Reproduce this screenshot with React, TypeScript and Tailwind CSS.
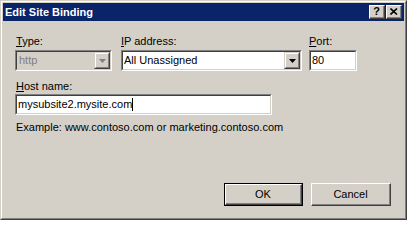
import React from "react";

function Sunken({ className = "", children, disabled = false }: { className?: string; children?: React.ReactNode; disabled?: boolean }) {
  return (
    <div className={`border border-t-[#808080] border-l-[#808080] border-r-white border-b-white ${className}`}>
      <div className={`h-full border border-t-[#404040] border-l-[#404040] border-r-[#d4d0c8] border-b-[#d4d0c8] flex items-center ${disabled ? "bg-[#d4d0c8]" : "bg-white"}`}>
        {children}
      </div>
    </div>
  );
}

function DropBtn({ disabled = false }: { disabled?: boolean }) {
  return (
    <div className="ml-auto w-[16px] h-[17px] border border-t-[#d4d0c8] border-l-[#d4d0c8] border-r-[#404040] border-b-[#404040]">
      <div className="h-full bg-[#d4d0c8] border border-t-white border-l-white border-r-[#808080] border-b-[#808080] flex items-center justify-center">
        <svg width="7" height="4" viewBox="0 0 7 4">
          <path d="M0 0H7L3.5 4Z" fill={disabled ? "#808080" : "#000"} />
        </svg>
      </div>
    </div>
  );
}

function TitleBtn({ children }: { children: React.ReactNode }) {
  return (
    <div className="w-[16px] h-[14px] border border-t-white border-l-white border-r-[#404040] border-b-[#404040]">
      <div className="h-full bg-[#d4d0c8] border-r border-b border-r-[#808080] border-b-[#808080] flex items-center justify-center">
        {children}
      </div>
    </div>
  );
}

function Btn({ label, def = false }: { label: string; def?: boolean }) {
  const inner = (
    <div className="h-full border border-t-white border-l-white border-r-[#404040] border-b-[#404040]">
      <div className="h-full bg-[#d4d0c8] border-r border-b border-r-[#808080] border-b-[#808080] flex items-center justify-center">
        {label}
      </div>
    </div>
  );
  return def ? (
    <div className="w-[79px] h-[23px] border border-black">{inner}</div>
  ) : (
    <div className="w-[80px] h-[23px]">{inner}</div>
  );
}

export default function App() {
  return (
    <div className="w-[407px] h-[220px] bg-[#d4d0c8] border border-t-[#d4d0c8] border-l-[#d4d0c8] border-r-[#404040] border-b-[#404040] font-['Liberation_Sans',Arial,sans-serif] text-[11px] leading-[13px] text-black">
      <div className="h-full border border-t-white border-l-white border-r-[#808080] border-b-[#808080] p-px flex flex-col">
        <div className="h-[18px] bg-[#0a246a] flex items-center pl-[2px] pr-[2px]">
          <span className="text-white font-bold text-[11px]">Edit Site Binding</span>
          <div className="ml-auto flex gap-[1px]">
            <TitleBtn>
              <span className="font-bold text-[11px] leading-none">?</span>
            </TitleBtn>
            <TitleBtn>
              <svg width="8" height="7" viewBox="0 0 8 7">
                <path d="M0.5 0.5L7 6.5M7 0.5L0.5 6.5" stroke="#000" strokeWidth="1.6" />
              </svg>
            </TitleBtn>
          </div>
        </div>
        <div className="flex-1 flex flex-col pl-[12px] pr-[13px] pt-[14px] pb-[11px]">
          <div className="flex">
            <div className="w-[97px] flex flex-col gap-[2px]">
              <div className="pl-[1px]"><u>T</u>ype:</div>
              <Sunken className="h-[21px]" disabled>
                <span className="pl-[2px] text-[#808080]">http</span>
                <DropBtn disabled />
              </Sunken>
            </div>
            <div className="ml-[9px] w-[181px] flex flex-col gap-[2px]">
              <div><u>I</u>P address:</div>
              <Sunken className="h-[21px]">
                <span className="pl-[1px]">All Unassigned</span>
                <DropBtn />
              </Sunken>
            </div>
            <div className="ml-[7px] w-[48px] flex flex-col gap-[2px]">
              <div><u>P</u>ort:</div>
              <Sunken className="h-[21px]">
                <span className="pl-[1px]">80</span>
              </Sunken>
            </div>
          </div>
          <div className="mt-[9px] pl-[1px]"><u>H</u>ost name:</div>
          <Sunken className="mt-[1px] w-[257px] h-[21px]">
            <span className="pl-[1px]">mysubsite2.mysite.com</span>
            <span className="w-px h-[13px] bg-black" />
          </Sunken>
          <div className="mt-[6px] pl-[1px]">Example: www.contoso.com or marketing.contoso.com</div>
          <div className="mt-auto flex justify-end gap-[8px]">
            <Btn label="OK" def />
            <Btn label="Cancel" />
          </div>
        </div>
      </div>
    </div>
  );
}
